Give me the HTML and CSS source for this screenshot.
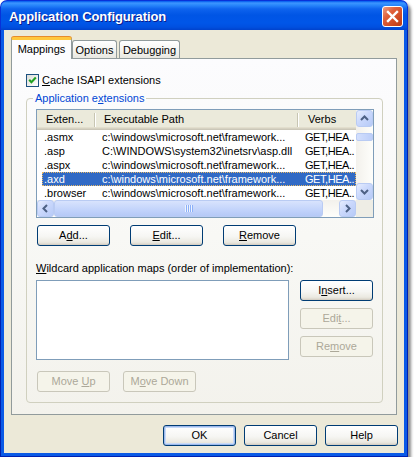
FILE: index.html
```html
<!DOCTYPE html>
<html>
<head>
<meta charset="utf-8">
<title>Application Configuration</title>
<link rel="stylesheet" href="styles.css">
</head>
<body>
<div class="window">
  <div class="titlebar">
    <span class="title">Application Configuration</span>
    <div class="close">
      <svg width="19" height="19" viewBox="0 0 19 19"><path d="M5 5 L14 14 M14 5 L5 14" stroke="#fff" stroke-width="2.4" stroke-linecap="square"/></svg>
    </div>
  </div>
  <div class="frame">
    <div class="client">
      <div class="tabs">
        <div class="tab tab-active">Mappings</div>
        <div class="tab tab-options">Options</div>
        <div class="tab tab-debug">Debugging</div>
      </div>
      <div class="pane">
        <div class="check-row">
          <span class="checkbox"><svg width="11" height="11" viewBox="0 0 11 11"><path d="M2.2 4.8 L4.4 7.2 L8.8 2.6" fill="none" stroke="#21A121" stroke-width="2.1"/></svg></span>
          <span class="check-label"><u>C</u>ache ISAPI extensions</span>
        </div>
        <fieldset class="group">
          <legend>Application e<u>x</u>tensions</legend>
          <div class="listview">
            <div class="lv-main">
              <div class="lv-header">
                <div class="hcol h1">Exten...</div>
                <div class="hsep"></div>
                <div class="hcol h2">Executable Path</div>
                <div class="hsep"></div>
                <div class="hcol h3">Verbs</div>
              </div>
              <div class="lv-row"><div class="cells"><span class="c1">.asmx</span><span class="c2">c:\windows\microsoft.net\framework...</span><span class="c3">GET,HEA..</span></div></div>
              <div class="lv-row"><div class="cells"><span class="c1">.asp</span><span class="c2">C:\WINDOWS\system32\inetsrv\asp.dll</span><span class="c3">GET,HEA..</span></div></div>
              <div class="lv-row"><div class="cells"><span class="c1">.aspx</span><span class="c2">c:\windows\microsoft.net\framework...</span><span class="c3">GET,HEA..</span></div></div>
              <div class="lv-row selected"><div class="cells"><span class="c1">.axd</span><span class="c2">c:\windows\microsoft.net\framework...</span><span class="c3">GET,HEA..</span></div></div>
              <div class="lv-row"><div class="cells"><span class="c1">.browser</span><span class="c2">c:\windows\microsoft.net\framework...</span><span class="c3">GET,HEA..</span></div></div>
            </div>
            <div class="vscroll">
              <div class="sb-btn"><svg width="15" height="15" viewBox="0 0 15 15"><polyline points="4,9 7.5,5.5 11,9" fill="none" stroke="#4D6185" stroke-width="2"/></svg></div>
              <div class="vtrack-top"></div>
              <div class="vthumb"></div>
              <div class="vtrack"></div>
              <div class="sb-btn"><svg width="15" height="15" viewBox="0 0 15 15"><polyline points="4,6 7.5,9.5 11,6" fill="none" stroke="#4D6185" stroke-width="2"/></svg></div>
            </div>
            <div class="hscroll">
              <div class="sb-btn"><svg width="15" height="15" viewBox="0 0 15 15"><polyline points="9,4 5.5,7.5 9,11" fill="none" stroke="#4D6185" stroke-width="2"/></svg></div>
              <div class="hthumb"><span class="grip"></span></div>
              <div class="htrack"></div>
              <div class="sb-btn"><svg width="15" height="15" viewBox="0 0 15 15"><polyline points="6,4 9.5,7.5 6,11" fill="none" stroke="#4D6185" stroke-width="2"/></svg></div>
            </div>
            <div class="corner"></div>
          </div>
          <div class="btn-row top-row">
            <button class="btn">A<u>d</u>d...</button>
            <button class="btn"><u>E</u>dit...</button>
            <button class="btn"><u>R</u>emove</button>
          </div>
          <div class="wild-label"><u>W</u>ildcard application maps (order of implementation):</div>
          <div class="wild">
            <div class="listbox"></div>
            <div class="side-btns">
              <button class="btn">I<u>n</u>sert...</button>
              <button class="btn" disabled>Edi<u>t</u>...</button>
              <button class="btn" disabled>Re<u>m</u>ove</button>
            </div>
          </div>
          <div class="btn-row move-row">
            <button class="btn" disabled>Move <u>U</u>p</button>
            <button class="btn" disabled>M<u>o</u>ve Down</button>
          </div>
        </fieldset>
      </div>
      <div class="footer">
        <button class="btn default">OK</button>
        <button class="btn">Cancel</button>
        <button class="btn">Help</button>
      </div>
    </div>
  </div>
</div>
</body>
</html>
```
FILE: styles.css
```css
* { box-sizing: border-box; }
html, body { margin: 0; padding: 0; background: #ffffff; }
body {
  font-family: "Liberation Sans", Arial, sans-serif;
  font-size: 11px;
  line-height: 13px;
  color: #000;
}
u { text-decoration: underline; text-underline-offset: 1px; }

.window {
  width: 408px;
  height: 457px;
  display: flex;
  flex-direction: column;
  border-radius: 8px 8px 0 0;
  box-shadow: 3px 3px 3px rgba(0, 0, 0, 0.45);
}

.titlebar {
  height: 30px;
  flex: none;
  display: flex;
  align-items: flex-start;
  padding: 0 4px 0 8px;
  border: 1px solid #0831D9;
  border-bottom: none;
  border-radius: 7px 7px 0 0;
  background: linear-gradient(to bottom,
    #0058EE 0px, #3D95FF 2px, #2A88FC 4px, #0E63EE 8px,
    #0055E5 14px, #0056E8 22px, #0050E0 26px, #0042CC 29px);
}
.title {
  margin-top: 8px;
  color: #fff;
  font-weight: bold;
  font-size: 13px;
  line-height: 15px;
  text-shadow: 1px 1px 0 #0A1B8C;
  letter-spacing: -0.1px;
}
.close {
  margin-left: auto;
  margin-top: 5px;
  width: 21px;
  height: 21px;
  border: 1px solid #fff;
  border-radius: 3px;
  background: linear-gradient(135deg, #EE9E84 0%, #E0603B 35%, #CF4A23 70%, #B93A14 100%);
  display: flex;
  align-items: center;
  justify-content: center;
}

.frame {
  flex: 1;
  display: flex;
  padding: 0 3px 3px;
  background: #0A5AE6;
  border: 1px solid #0020B0;
  border-top: none;
}
.client {
  flex: 1;
  background: #ECE9D8;
  padding: 7px 7px 0 7px;
  display: flex;
  flex-direction: column;
}

/* tabs */
.tabs {
  height: 21px;
  display: flex;
  align-items: flex-end;
}
.tab {
  height: 18px;
  border: 1px solid #919B9C;
  border-bottom: none;
  border-radius: 3px 3px 0 0;
  background: linear-gradient(to bottom, #FFFFFF, #F3F3EF 60%, #E8E7E0);
  display: flex;
  align-items: center;
  justify-content: center;
  padding-top: 1px;
}
.tab-active {
  width: 61px;
  height: 22px;
  margin-bottom: -1px;
  position: relative;
  z-index: 1;
  background: #FCFCFE;
  border-top: 3px solid #FFC73C;
  box-shadow: 0 -1px 0 #E68B2C;
  padding-top: 0;
}
.tab-options { width: 45px; }
.tab-debug { width: 61px; margin-left: 2px; }

.pane {
  width: 386px;
  height: 357px;
  border: 1px solid #919B9C;
  background: linear-gradient(to bottom, #FCFCFE 0%, #F8F8F5 50%, #F3F2EC 100%);
  padding: 15px 0 0 14px;
  display: flex;
  flex-direction: column;
}

.check-row {
  display: flex;
  align-items: center;
  height: 13px;
}
.checkbox {
  width: 13px;
  height: 13px;
  border: 1px solid #1C5180;
  background: linear-gradient(135deg, #DCDCD7, #FFFFFF);
  display: flex;
}
.check-label { margin-left: 3px; }

.group {
  width: 357px;
  margin: 5px 0 0 0;
  padding: 4px 8px 10px 9px;
  border: 1px solid #D0D0BF;
  border-radius: 4px;
  min-width: 0;
}
.group legend {
  padding: 0 2px;
  margin-left: -3px;
  color: #0046D5;
  line-height: 13px;
}

/* listview */
.listview {
  width: 338px;
  height: 109px;
  border: 1px solid #7F9DB9;
  background: #fff;
  display: grid;
  grid-template-columns: 319px 17px;
  grid-template-rows: 90px 17px;
}
.lv-main {
  overflow: hidden;
  white-space: nowrap;
}
.lv-header {
  height: 20px;
  display: flex;
  align-items: center;
  background: #EBEADB;
  box-shadow: inset 0 -1px 0 #CBC7B8, inset 0 -2px 0 #D6D2C2, inset 0 -3px 0 #E2DECD;
}
.hcol { flex: none; padding-bottom: 1px; }
.h1 { width: 57px; padding-left: 9px; }
.h2 { width: 201px; padding-left: 8px; }
.h3 { width: 57px; padding-left: 9px; }
.hsep {
  flex: none;
  width: 2px;
  height: 14px;
  border-left: 1px solid #C7C5B2;
  border-right: 1px solid #FFFFFF;
  margin-bottom: 1px;
}
.lv-row {
  height: 14px;
  display: flex;
  padding-left: 5px;
}
.cells {
  flex: 1;
  display: flex;
  align-items: center;
  min-width: 0;
  overflow: hidden;
}
.cells span { flex: none; overflow: hidden; }
.c1 { width: 54px; padding-left: 2px; }
.c2 { width: 203px; padding-left: 6px; }
.c3 { width: 57px; padding-left: 6px; letter-spacing: -0.45px; }
.selected .cells {
  background: #316AC5;
  color: #fff;
  outline: 1px dotted #E6B866;
  outline-offset: -1px;
}

/* scrollbars */
.sb-btn {
  flex: none;
  width: 17px;
  height: 17px;
  border: 1px solid #B9CBF3;
  border-radius: 3px;
  background: linear-gradient(135deg, #E6EDFE 0%, #CAD8FC 45%, #B6CAF7 100%);
  display: flex;
  align-items: center;
  justify-content: center;
}
.vscroll {
  display: flex;
  flex-direction: column;
  background: linear-gradient(to right, #F3F1EC, #FEFEFB);
}
.vtrack-top { height: 6px; flex: none; }
.vthumb {
  height: 8px;
  flex: none;
  border: 1px solid #B9CBF3;
  border-radius: 2px;
  background: linear-gradient(to right, #D3DFFD, #BCCEF9);
}
.vtrack { flex: 1; }
.hscroll {
  display: flex;
  background: linear-gradient(to bottom, #F3F1EC, #FEFEFB);
}
.hthumb {
  width: 269px;
  flex: none;
  border: 1px solid #B9CBF3;
  border-radius: 3px;
  background: linear-gradient(to bottom, #D8E3FD, #C2D3FB 60%, #B5C9F6);
  display: flex;
  align-items: center;
  justify-content: center;
}
.grip {
  width: 8px;
  height: 7px;
  background: repeating-linear-gradient(to right, #EEF4FE 0 1px, #8CB0F8 1px 2px);
}
.htrack { flex: 1; }
.corner { background: #EEEDE5; }

/* buttons */
.btn {
  font-family: inherit;
  font-size: 11px;
  line-height: 13px;
  color: #000;
  width: 73px;
  height: 21px;
  padding: 0;
  border: 1px solid #003C74;
  border-radius: 3px;
  background: linear-gradient(to bottom, #FFFFFF 0%, #F6F6F3 55%, #EBE9E1 85%, #D6D0C5 100%);
  box-shadow: inset 0 -1px 0 #D6D0C5;
}
.btn:disabled {
  color: #ACA899;
  border-color: #C9C7BA;
  background: #F5F4EA;
  box-shadow: none;
}
.btn.default {
  box-shadow: inset 0 0 0 1px #9DB9EB, inset 0 0 0 2px #C7DAF8;
}

.btn-row { display: flex; }
.top-row { margin-top: 7px; padding-left: 1px; gap: 20px; }
.wild-label { margin-top: 16px; }
.wild {
  margin-top: 5px;
  display: flex;
  gap: 11px;
}
.listbox {
  width: 253px;
  height: 80px;
  border: 1px solid #7F9DB9;
  background: #fff;
}
.side-btns {
  display: flex;
  flex-direction: column;
  gap: 7px;
}
.move-row { margin-top: 11px; padding-left: 1px; gap: 13px; }

.footer {
  margin-top: 10px;
  margin-right: -1px;
  display: flex;
  justify-content: flex-end;
  gap: 8px;
}
```
